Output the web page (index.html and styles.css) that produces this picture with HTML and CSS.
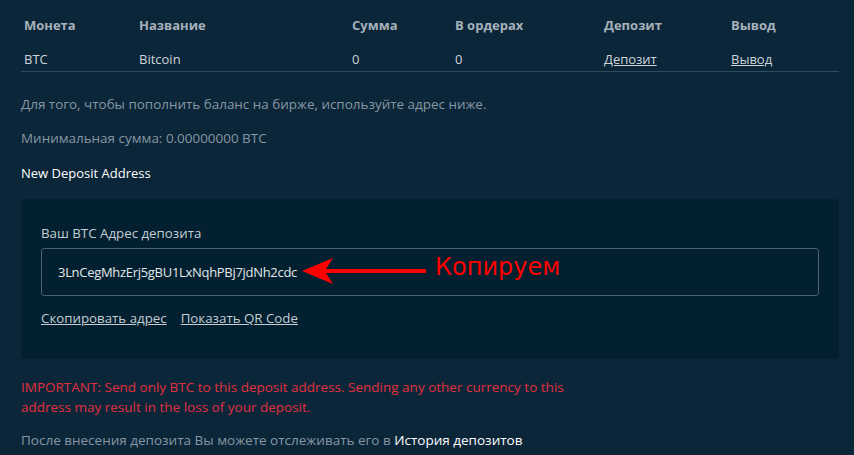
FILE: index.html
```html
<!DOCTYPE html>
<html lang="ru">
<head>
    <meta charset="UTF-8">
    <title>Депозит BTC</title>
    <link rel="stylesheet" href="styles.css">
</head>
<body>
    <table class="balances">
        <thead>
            <tr>
                <th class="c-coin">Монета</th>
                <th class="c-name">Название</th>
                <th class="c-sum">Сумма</th>
                <th class="c-orders">В ордерах</th>
                <th class="c-dep">Депозит</th>
                <th class="c-out">Вывод</th>
            </tr>
        </thead>
        <tbody>
            <tr>
                <td>BTC</td>
                <td>Bitcoin</td>
                <td>0</td>
                <td>0</td>
                <td><a href="#">Депозит</a></td>
                <td><a href="#">Вывод</a></td>
            </tr>
        </tbody>
    </table>

    <p class="muted first">Для того, чтобы пополнить баланс на бирже, используйте адрес ниже.</p>
    <p class="muted">Минимальная сумма: 0.00000000 BTC</p>
    <p class="title">New Deposit Address</p>

    <div class="card">
        <div class="label">Ваш BTC Адрес депозита</div>
        <div class="address">
            <span class="addr-text">3LnCegMhzErj5gBU1LxNqhPBj7jdNh2cdc</span>
            <span class="note">
                <svg class="arrow" width="126" height="30" viewBox="0 0 126 30">
                    <path d="M0 15 L31 2 L24 13 L124 13 L124 17 L24 17 L31 28 Z" fill="#ff0000"/>
                </svg>
                <span class="note-text">Копируем</span>
            </span>
        </div>
        <div class="actions">
            <a href="#">Скопировать адрес</a>
            <a href="#">Показать QR Code</a>
        </div>
    </div>

    <p class="warning">IMPORTANT: Send only BTC to this deposit address. Sending any other currency to this<br>address may result in the loss of your deposit.</p>
    <p class="muted last">После внесения депозита Вы можете отслеживать его в <a class="history" href="#">История депозитов</a></p>
</body>
</html>
```

FILE: styles.css
```css
html, body {
    background-color: #0b2639;
}
body {
    font-family: "Open Sans", sans-serif;
    font-size: 13px;
    color: #8796a2;
    margin: 0;
    padding: 0 15px 0 21px;
}
.balances {
    width: 818px;
    border-collapse: collapse;
    margin-top: 10px;
}
.balances th {
    text-align: left;
    font-weight: 700;
    color: #a7b1ba;
    padding: 6px 3px;
    height: 17px;
}
.balances td {
    text-align: left;
    color: #cdd4da;
    padding: 10px 3px 3px;
    border-bottom: 1px solid #2f4c5e;
}
.balances a {
    color: #cdd4da;
}
.c-coin { width: 109px; }
.c-name { width: 207px; }
.c-sum { width: 97px; }
.c-orders { width: 143px; }
.c-dep { width: 121px; }
.muted {
    margin: 0;
    padding-top: 17px;
    line-height: 17px;
    font-size: 13.45px;
}
.muted.first {
    padding-top: 24px;
}
.muted.last {
    padding-top: 15px;
    font-size: 13.5px;
}
.title {
    margin: 0;
    padding-top: 18px;
    color: #ffffff;
    line-height: 17px;
}
.card {
    margin-top: 17px;
    background-color: #02202f;
    border-radius: 4px;
    padding: 26px 20px 32px;
    width: 778px;
}
.label {
    color: #c4cdd4;
    line-height: 17px;
    font-size: 13.3px;
}
.address {
    margin-top: 6px;
    height: 46px;
    border: 1px solid #4a6272;
    border-radius: 3px;
    display: flex;
    align-items: center;
    padding-left: 16px;
    color: #e2e7eb;
    position: relative;
}
.addr-text {
    letter-spacing: -0.3px;
}
.note {
    position: absolute;
    left: 260px;
    top: 7px;
    display: flex;
    align-items: center;
}
.arrow {
    display: block;
}
.note-text {
    font-family: "DejaVu Sans", sans-serif;
    font-size: 24px;
    color: #ff0000;
    margin-left: 7px;
    margin-top: -8px;
}
.actions {
    margin-top: 14px;
    display: flex;
    gap: 14px;
    line-height: 17px;
    font-size: 13.3px;
}
.actions a {
    color: #c4cdd4;
}
.warning {
    margin: 0;
    padding-top: 18px;
    color: #e0303f;
    line-height: 20px;
    font-size: 13.5px;
}
.history {
    color: #ffffff;
    text-decoration: none;
}
```
